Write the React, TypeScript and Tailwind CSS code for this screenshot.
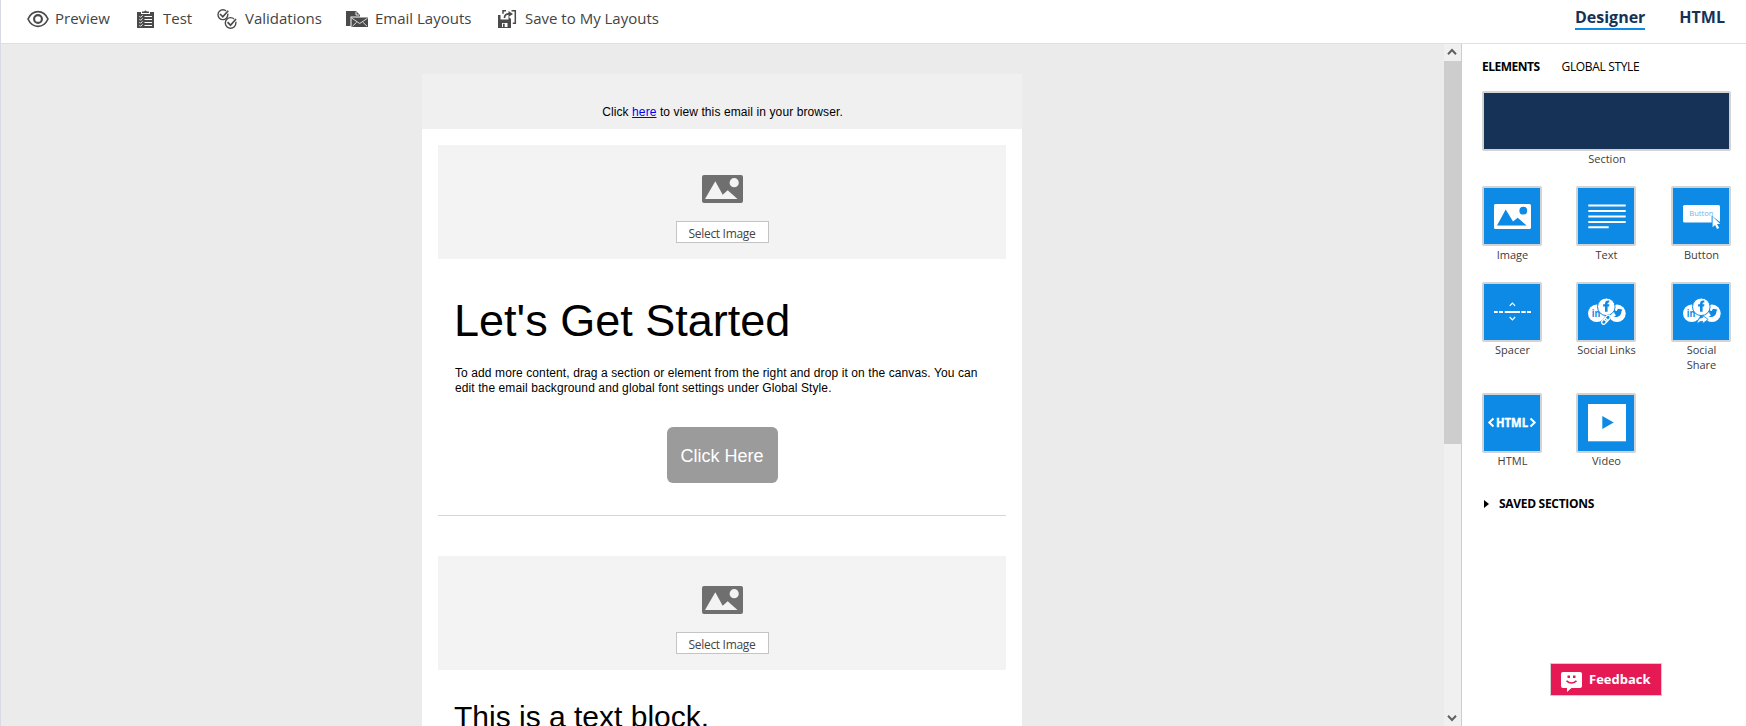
import type { ReactNode } from "react";

const EyeIcon = () => (
  <svg width="22" height="18" viewBox="0 0 22 18" fill="none" stroke="#4a4a4a">
    <path d="M1 9C5.500-.8 16.500-.8 21 9 16.500 18.800 5.500 18.800 1 9Z" strokeWidth="1.700" />
    <circle cx="11" cy="9" r="3.900" strokeWidth="2.100" />
  </svg>
);

const ClipboardIcon = () => (
  <svg width="18" height="18" viewBox="0 0 18 18" fill="none">
    <path d="M0 2h4v2h9V2h4v16H0z" fill="#4a4a4a" />
    <path d="M5 3V1.400h2.200Q8.500-.6 9.800 1.400H12V3z" fill="#4a4a4a" />
    <path d="M7.500 6.500h7.500M7.500 9.500h7.500M7.500 12.500h7.500M7.500 15.500h7.500" stroke="#fff" strokeWidth="1" />
    <path d="m2.500 6.300 1 1 2-2m-3 4 1 1 2-2m-3 4 1 1 2-2m-3 4 1 1 2-2" stroke="#fff" />
  </svg>
);

const ValidationsIcon = () => (
  <svg width="20" height="20" viewBox="0 0 20 20" fill="none" stroke="#4a4a4a">
    <circle cx="5.900" cy="5.700" r="4.900" strokeWidth="1.400" />
    <path d="m3 5 2.800 2.800 5.400-6" stroke="#fff" strokeWidth="3.200" />
    <path d="m3 5 2.800 2.800 5.400-6" strokeWidth="1.700" />
    <circle cx="13.600" cy="13.900" r="5.300" strokeWidth="1.400" />
    <path d="m10.500 13.200 3 3 5.500-6.200" stroke="#fff" strokeWidth="3.200" />
    <path d="m10.500 13.200 3 3 5.500-6.200" strokeWidth="1.700" />
  </svg>
);

const EmailLayoutsIcon = () => (
  <svg width="22" height="17" viewBox="0 0 22 17" fill="none">
    <path d="M0 15V0h10l4 4v1.500H4.500V15z" fill="#4a4a4a" />
    <path d="M10 .8V4h3.200" stroke="#fff" strokeWidth=".9" />
    <path d="M5.500 6.500H22V16H5.500z" fill="#4a4a4a" />
    <path d="m6 7.300 7.700 5.200 7.800-5.200M6.500 15.200l4.200-4M21 15.200l-4.200-4" stroke="#fff" strokeWidth=".8" />
  </svg>
);

const SaveIcon = () => (
  <svg width="19" height="18" viewBox="0 0 19 18" fill="none">
    <path d="M0 5h2.500v4.500h8V6.500L13 9v9H0z" fill="#4a4a4a" />
    <path d="M4 13h5.500v4H4z" fill="#fff" />
    <path d="M5 13.700h1.700v3.300H5z" fill="#4a4a4a" />
    <path d="M8 .8H5v3M13.500.8h3.800v12.400h-2.500" stroke="#4a4a4a" strokeWidth="1.500" />
    <path d="M6.500 8C6.500 5 8 3.800 11 3.800" stroke="#4a4a4a" strokeWidth="1.700" />
    <path d="M10.500.9 15 3.900l-4.500 3z" fill="#4a4a4a" />
  </svg>
);

const tools = [
  { label: "Preview", icon: <EyeIcon />, item: "w-[110px]", slot: "w-[28px]" },
  { label: "Test", icon: <ClipboardIcon />, item: "w-[80px]", slot: "w-[26px]" },
  { label: "Validations", icon: <ValidationsIcon />, item: "w-[129px]", slot: "w-[28px]" },
  { label: "Email Layouts", icon: <EmailLayoutsIcon />, item: "w-[152px]", slot: "w-[29px]" },
  { label: "Save to My Layouts", icon: <SaveIcon />, item: "w-[165px]", slot: "w-[27px]" },
];

function Toolbar() {
  return (
    <header className="flex h-11 shrink-0 justify-between border-b border-[#dcdfe8] bg-white">
      <nav className="flex h-[38px] items-center pl-[26px] text-[15px] text-[#444]">
        {tools.map((t) => (
          <button key={t.label} className={`flex shrink-0 items-center whitespace-nowrap ${t.item}`}>
            <span className={`shrink-0 ${t.slot}`}>{t.icon}</span>
            <span className="-mt-0.5">{t.label}</span>
          </button>
        ))}
      </nav>
      <nav className="flex items-start gap-[34px] pt-1.5 pr-[21px] text-base leading-[22px] font-bold text-[#163257]">
        <button className="border-b-2 border-[#0c8ae5]">Designer</button>
        <button>HTML</button>
      </nav>
    </header>
  );
}

function ImageBlock() {
  return (
    <div className="flex h-[114px] flex-col items-center bg-[#f3f3f3] pt-[30px] font-['Open_Sans',sans-serif]">
      <svg width="41" height="28" viewBox="0 0 41 28">
        <rect width="41" height="28" rx="2" fill="#6f6f6f" />
        <path d="M3 24 13.300 6.300 20.700 19.700l5-4.400L35.500 24z" fill="#f3f3f3" />
        <circle cx="32.200" cy="7.700" r="4.600" fill="#f3f3f3" />
      </svg>
      <button className="mt-[18px] h-[22px] w-[93px] border border-[#c4c4c4] bg-white pt-px text-xs leading-[22px] tracking-[-0.32px] text-[#444]">
        Select Image
      </button>
    </div>
  );
}

function EmailCanvas() {
  return (
    <div className="flex min-w-0 flex-1 justify-center overflow-hidden bg-[#ebebeb] pt-[30px] pr-px">
      <div className="h-[1400px] w-[600px] shrink-0 bg-white font-['Liberation_Sans',sans-serif] text-black">
        <p className="h-[55px] bg-[#f0f0f0] pt-[31px] pl-px text-center text-xs leading-[15px] tracking-[0.1px]">
          Click <a className="text-[#0000ee] underline">here</a> to view this email in your browser.
        </p>
        <div className="px-4 pt-4">
          <ImageBlock />
          <div className="px-[17px]">
            <h1 className="mt-[37px] -ml-px text-[45px] leading-[50px]">Let's Get Started</h1>
            <p className="mt-5 text-xs leading-[15px] tracking-[0.1px]">
              To add more content, drag a section or element from the right and drop it on the canvas. You can
              <br />
              edit the email background and global font settings under Global Style.
            </p>
          </div>
          <div className="mt-[31px] flex justify-center">
            <button className="h-14 w-[111px] rounded-md bg-[#9b9b9b] pt-0.5 text-lg text-white">Click Here</button>
          </div>
          <hr className="mt-8 mb-10 border-[#d5d5d5]" />
          <ImageBlock />
          <h2 className="mt-[30px] px-4 text-[30px] leading-[34px]">This is a text block.</h2>
        </div>
      </div>
    </div>
  );
}

function Scrollbar() {
  return (
    <div className="flex w-[17px] shrink-0 flex-col bg-[#f0f0f0]">
      <div className="flex h-[17px] items-center justify-center pr-px pb-px">
        <svg width="10" height="8" viewBox="0 0 10 8" fill="none" stroke="#606060" strokeWidth="2">
          <path d="M1 6.200 5 2l4 4.200" />
        </svg>
      </div>
      <div className="h-[383px] bg-[#cdcdcd]" />
      <div className="mt-auto flex h-[17px] items-center justify-center pr-px">
        <svg width="10" height="8" viewBox="0 0 10 8" fill="none" stroke="#606060" strokeWidth="2">
          <path d="M1 1.800 5 6l4-4.200" />
        </svg>
      </div>
    </div>
  );
}

const SocialBase = () => (
  <g>
    <circle cx="20.700" cy="31.300" r="8.700" fill="#fff" />
    <circle cx="41" cy="31.300" r="8.700" fill="#fff" />
    <path d="M37.500 34.500c4 1.800 8-.8 7.900-5.200l1.300-1.500-1.500.2.800-1.200-1.500.4c-1.700-1.300-3.700-.2-3.500 1.700-1.200.1-2.300-.3-3.300-1.300.2 3 .8 4.600 2.300 5.600-.8.800-1.500 1.200-2.500 1.300z" fill="#0c8ae5" />
    <text x="15.800" y="34.800" fill="#0c8ae5" textLength="8.500" lengthAdjust="spacingAndGlyphs" className="text-[10px] font-bold">in</text>
    <circle cx="30.300" cy="24.800" r="8.800" fill="#fff" stroke="#0c8ae5" strokeWidth="1" />
    <path d="M29 29.700v-5.200h-1.900v-2.200H29c-.2-2.900 1.300-4.300 4.300-3.800v2.100c-1.500-.1-1.800.3-1.700 1.700h1.800l-.3 2.200h-1.500v5.200z" fill="#0c8ae5" />
  </g>
);

const glyphs: Record<string, ReactNode> = {
  Image: (
    <>
      <rect x="12" y="18" width="37" height="25" rx="1.500" fill="#fff" />
      <path d="M15 39.500 23.700 23.500l7.300 12 4.700-3.800 9 7.800z" fill="#0c8ae5" />
      <circle cx="41.300" cy="24.700" r="3.900" fill="#0c8ae5" />
    </>
  ),
  Text: <path d="M12.300 19.500h37.400M12.300 25h37.400M12.300 30.500h37.400M12.300 36h37.400M12.300 41.300h20.400" stroke="#fff" strokeWidth="1.900" />,
  Button: (
    <>
      <rect x="12" y="19" width="37" height="17.500" rx="1.500" fill="#fff" />
      <text x="18.300" y="30.300" fill="#6bb8ef" textLength="24" lengthAdjust="spacingAndGlyphs" className="text-[8px]">Button</text>
      <path d="M40.600 29.500 49.500 36.500V38h-8.900z" fill="#0c8ae5" />
      <path d="m41.600 30.500 7.600 7.500-3.200.1 2.200 3.900-2.200 1-1.900-3.900-2.500 2.200z" fill="#fff" />
    </>
  ),
  Spacer: (
    <g fill="none" stroke="#fff">
      <path d="M12 30h3.700M17 30h4M22.700 30H38M39.300 30h4.400M45 30h4" strokeWidth="2" />
      <path d="m27.700 23.800 2.700-2.800 2.700 2.800M27.700 35l2.700 2.800 2.700-2.800" strokeWidth="1.200" />
    </g>
  ),
  "Social Links": (
    <>
      <SocialBase />
      <rect x="24" y="35.200" width="11.800" height="5" rx="2.500" transform="rotate(-48 30 37.700)" fill="#0c8ae5" />
      <g fill="none" stroke="#fff" strokeWidth="1.300" transform="rotate(-48 30 37.700)">
        <rect x="24.500" y="35.700" width="6.500" height="4" rx="2" />
        <rect x="28.800" y="35.700" width="6.500" height="4" rx="2" />
      </g>
    </>
  ),
  "Social Share": (
    <>
      <SocialBase />
      <path d="M26 42c.3-4 2.300-6.300 5.700-6.500v-2l5.500 4-5.500 4v-2.200c-2.200-.1-4 .8-5.700 2.700z" fill="#fff" stroke="#0c8ae5" strokeWidth=".8" />
    </>
  ),
  HTML: (
    <>
      <path d="m11.500 25.500-4.200 4 4.200 4M48.500 25.500l4.200 4-4.200 4" fill="none" stroke="#fff" strokeWidth="2" />
      <text x="14" y="34" fill="#fff" stroke="#fff" strokeWidth=".4" textLength="32" lengthAdjust="spacingAndGlyphs" className="text-[12px] font-bold">HTML</text>
    </>
  ),
  Video: (
    <>
      <rect x="12" y="11" width="38" height="37.300" fill="#fff" />
      <path d="M26.300 23v13l11.400-6.500z" fill="#0c8ae5" />
    </>
  ),
};

function Tile({ name, children }: { name: string; children: ReactNode }) {
  return (
    <div className="w-[60px] text-center text-[11px] leading-[15px] whitespace-nowrap text-[#3c3c3c]">
      <div className="h-[60px] rounded-xs border-2 border-[#d3d3d3] bg-[#0c8ae5]">
        <svg width="56" height="56" viewBox="2 2 56 56">{glyphs[name]}</svg>
      </div>
      <div className="pl-px">{children}</div>
    </div>
  );
}

function ElementsPanel() {
  return (
    <aside className="w-[285px] shrink-0 border-l border-[#cdcdcd] bg-white pt-[15px] pr-[15px] pl-5">
      <div className="flex gap-[22px] text-xs leading-4 tracking-[-0.5px] text-black">
        <button className="font-bold">ELEMENTS</button>
        <button className="tracking-[-0.35px]">GLOBAL STYLE</button>
      </div>
      <div className="mt-4 h-[60px] rounded-xs border-2 border-[#d3d3d3] bg-[#163257]" />
      <p className="pl-px text-center text-[11px] leading-[15px] text-[#3c3c3c]">Section</p>
      <div className="mt-5 grid grid-cols-[94px_95px_60px] gap-y-[21px]">
        {["Image", "Text", "Button"].map((n) => (
          <Tile key={n} name={n}>
            <p className="-mb-px pt-px">{n}</p>
          </Tile>
        ))}
        <Tile name="Spacer">Spacer</Tile>
        <Tile name="Social Links">Social Links</Tile>
        <Tile name="Social Share">Social<br />Share</Tile>
        <Tile name="HTML">HTML</Tile>
        <Tile name="Video">Video</Tile>
      </div>
      <button className="mt-7 flex items-center gap-2.5 pl-0.5 text-xs leading-4 font-bold tracking-[-0.3px] text-black">
        <svg width="5" height="8" viewBox="0 0 5 8"><path d="M0 0v8l5-4z" /></svg>
        SAVED SECTIONS
      </button>
    </aside>
  );
}

function FeedbackButton() {
  return (
    <button className="absolute top-[663px] left-[1549px] flex h-[33px] w-[112px] items-center border border-[#cfcfcf] bg-[#e51a54] pl-[10px] text-[13px] font-bold text-white">
      <svg width="21" height="20" viewBox="0 0 21 20" className="mt-1 mr-[7px] shrink-0">
        <path d="M2 0h17a2 2 0 0 1 2 2v12a2 2 0 0 1-2 2h-8.500L6 20v-4H2a2 2 0 0 1-2-2V2a2 2 0 0 1 2-2z" fill="#fff" />
        <path d="M6.500 3.500h2.500v2.500H6.500zM12 3.500h2.500v2.500H12z" fill="#e51a54" />
        <path d="M5.500 8.800q5 4.400 10 0" fill="none" stroke="#e51a54" strokeWidth="1.600" />
      </svg>
      Feedback
    </button>
  );
}

export default function App() {
  return (
    <div className="relative flex h-screen w-full flex-col overflow-hidden border-l border-[#d8dbe6] bg-white font-['Open_Sans',sans-serif]">
      <Toolbar />
      <main className="flex min-h-0 flex-1">
        <EmailCanvas />
        <Scrollbar />
        <ElementsPanel />
      </main>
      <FeedbackButton />
    </div>
  );
}
